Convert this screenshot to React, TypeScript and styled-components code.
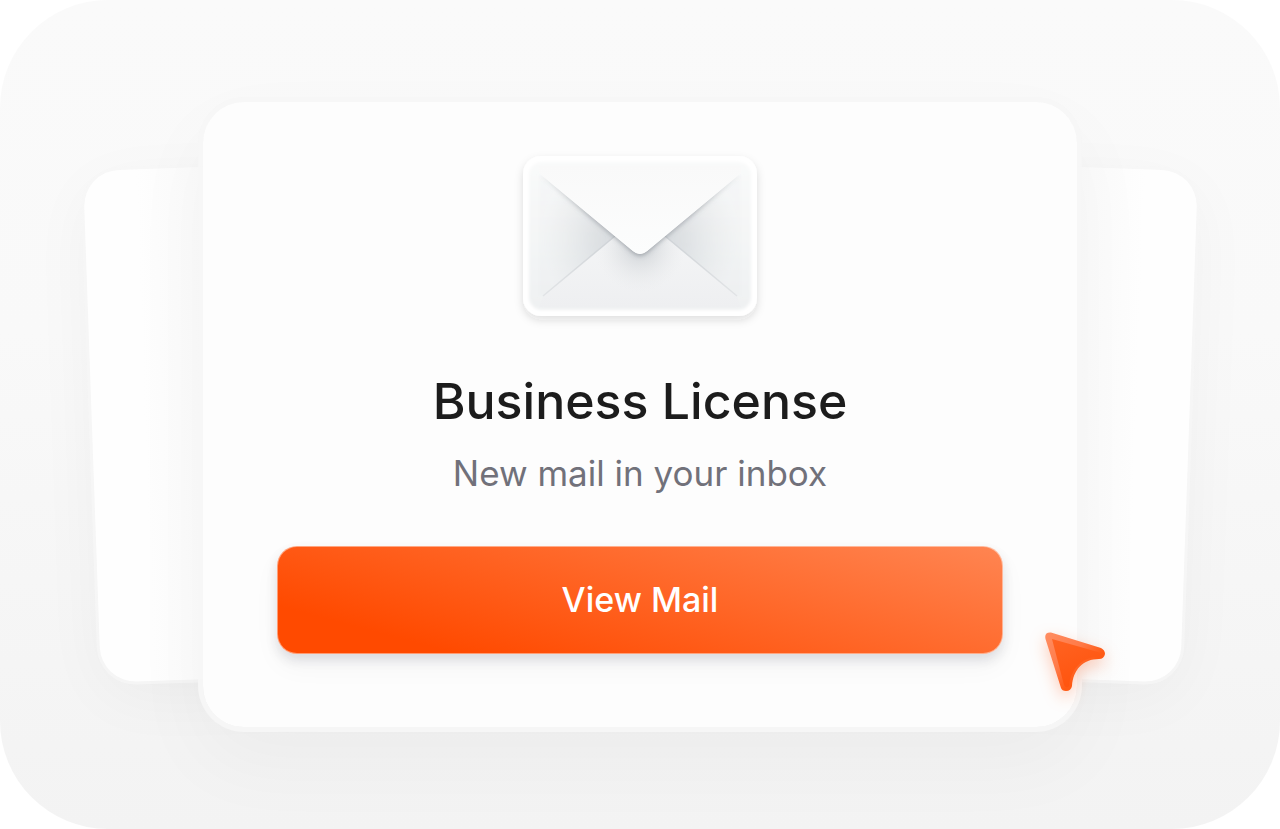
import React from "react";
import styled, { createGlobalStyle } from "styled-components";

const GlobalStyle = createGlobalStyle`
  *, *::before, *::after { box-sizing: border-box; }
  body {
    margin: 0;
    background: #ffffff;
    font-family: Inter, "Noto Sans", sans-serif;
  }
`;

const Stage = styled.main`
  display: grid;
  place-items: center;
  min-height: 100vh;
  padding: 48px 0;
  overflow: hidden;
  border-radius: 108px;
  background: linear-gradient(180deg, #fafafa 0%, #f9f9f9 40%, #f3f3f3 100%);
`;

const Deck = styled.div`
  display: grid;
  grid-template-columns: minmax(0, 1fr);
  align-items: center;
  justify-items: center;
  width: 85.7%;
`;

const SideCard = styled.div<{ $side: "left" | "right" }>`
  grid-area: 1 / 1;
  justify-self: ${(p) => (p.$side === "left" ? "start" : "end")};
  width: 40%;
  height: 512px;
  margin-top: 24px;
  border-radius: 36px;
  background: linear-gradient(
    ${(p) => (p.$side === "left" ? "90deg" : "270deg")},
    #fefefe 12%,
    #fafafa 28%
  );
  box-shadow: 0 0 0 3px rgba(246, 246, 246, 0.8), 0 16px 64px rgba(0, 0, 0, 0.04);
  transform: rotate(${(p) => (p.$side === "left" ? "-2deg" : "2deg")});
  transform-origin: ${(p) => p.$side} center;
`;

const Card = styled.article`
  grid-area: 1 / 1;
  position: relative;
  display: flex;
  flex-direction: column;
  align-items: center;
  width: 80.6%;
  padding: 54px 74px 73px;
  border: 5px solid rgba(246, 246, 246, 0.9);
  border-radius: 46px;
  background: #fdfdfd;
  background-clip: padding-box;
  box-shadow: 0 32px 80px rgba(0, 0, 0, 0.036);
  text-align: center;
`;

const Envelope = styled.svg`
  display: block;
  flex: none;
  overflow: visible;
`;

const Title = styled.h1`
  margin: 53px 0 0;
  color: #1c1c1c;
  font-size: 50px;
  font-weight: 500;
  line-height: 64px;
`;

const Subtitle = styled.p`
  margin: 16px 0 0;
  color: #71717a;
  font-size: 35px;
  font-weight: 400;
  line-height: 48px;
`;

const ViewButton = styled.button`
  width: 100%;
  height: 108px;
  margin-top: 49px;
  padding: 0;
  border: 1px solid rgba(255, 255, 255, 0.45);
  border-radius: 20px;
  background: linear-gradient(15deg, #ff4a00 16%, #ff8552 100%) border-box;
  box-shadow: 0 6px 12px rgba(30, 30, 50, 0.12), 0 12px 28px rgba(30, 30, 50, 0.04);
  color: #ffffff;
  font-family: inherit;
  font-size: 34px;
  font-weight: 500;
  line-height: 44px;
  cursor: pointer;
`;

const Pointer = styled.svg`
  position: absolute;
  right: -28px;
  bottom: 35px;
  overflow: visible;
  filter: drop-shadow(0 6px 8px rgba(255, 80, 10, 0.28));
`;

function MailIcon() {
  return (
    <Envelope width="234" height="160" viewBox="0 0 234 160" aria-hidden="true">
      <defs>
        <linearGradient id="paper" x1="0" y1="0" x2="0" y2="1">
          <stop offset="0" stopColor="#f9fafa" />
          <stop offset="1" stopColor="#eff1f2" />
        </linearGradient>
        <linearGradient id="flap" x1="0" y1="0" x2="0" y2="1">
          <stop offset="0" stopColor="#f9f9f9" />
          <stop offset="1" stopColor="#fcfdfd" />
        </linearGradient>
        <linearGradient id="pocket" x1="0" y1="0" x2="0" y2="1">
          <stop offset="0" stopColor="#f4f5f6" />
          <stop offset="1" stopColor="#eeeff1" />
        </linearGradient>
        <radialGradient id="shade" gradientUnits="userSpaceOnUse" cx="117" cy="84" r="100">
          <stop offset="0" stopColor="#b4bac0" stopOpacity="0.6" />
          <stop offset="0.45" stopColor="#c4c9ce" stopOpacity="0.45" />
          <stop offset="1" stopColor="#dfe2e5" stopOpacity="0.1" />
        </radialGradient>
        <radialGradient id="pocketShade" gradientUnits="userSpaceOnUse" cx="117" cy="90" r="46">
          <stop offset="0" stopColor="#aeb4ba" stopOpacity="0.6" />
          <stop offset="1" stopColor="#e4e6e8" stopOpacity="0" />
        </radialGradient>
        <linearGradient id="foldLeft" gradientUnits="userSpaceOnUse" x1="20" y1="140" x2="92" y2="80">
          <stop offset="0" stopColor="#d4d7da" stopOpacity="0.5" />
          <stop offset="1" stopColor="#cfd3d7" />
        </linearGradient>
        <linearGradient id="foldRight" gradientUnits="userSpaceOnUse" x1="214" y1="140" x2="142" y2="80">
          <stop offset="0" stopColor="#d4d7da" stopOpacity="0.5" />
          <stop offset="1" stopColor="#cfd3d7" />
        </linearGradient>
        <linearGradient id="edgeFade" gradientUnits="userSpaceOnUse" x1="14" y1="0" x2="220" y2="0">
          <stop offset="0" stopColor="#ffffff" stopOpacity="0" />
          <stop offset="0.25" stopColor="#ffffff" />
          <stop offset="0.75" stopColor="#ffffff" />
          <stop offset="1" stopColor="#ffffff" stopOpacity="0" />
        </linearGradient>
        <mask id="flapMask" maskUnits="userSpaceOnUse" x="0" y="0" width="234" height="160">
          <rect width="234" height="160" fill="url(#edgeFade)" />
        </mask>
        <filter id="outer" x="-20%" y="-20%" width="140%" height="150%">
          <feDropShadow dx="0" dy="4" stdDeviation="4" floodColor="#20242c" floodOpacity="0.14" />
        </filter>
        <filter id="flapShadow" x="-20%" y="-20%" width="140%" height="150%">
          <feDropShadow dx="0" dy="2" stdDeviation="2" floodColor="#6f7780" floodOpacity="0.5" />
        </filter>
        <filter id="soft" x="-10%" y="-10%" width="120%" height="120%">
          <feGaussianBlur stdDeviation="1.5" />
        </filter>
        <clipPath id="inside">
          <rect x="6" y="6" width="222" height="148" rx="13" />
        </clipPath>
      </defs>
      <rect width="234" height="160" rx="18" fill="#ffffff" filter="url(#outer)" />
      <rect x="6" y="6" width="222" height="148" rx="13" fill="url(#paper)" filter="url(#soft)" />
      <g clipPath="url(#inside)">
        <path d="M16 18 L117 100 L218 18 V140 H16 Z" fill="url(#shade)" filter="url(#soft)" />
        <path d="M20 140 L92 80 H142 L214 140 L218 151 H16 Z" fill="url(#pocket)" />
        <path d="M20 140 L92 80 H142 L214 140 Z" fill="url(#pocketShade)" />
        <path d="M20 140 L92 80" stroke="url(#foldLeft)" strokeWidth="1.5" />
        <path d="M214 140 L142 80" stroke="url(#foldRight)" strokeWidth="1.5" />
        <g mask="url(#flapMask)">
          <path d="M16 17 L110 95 Q117 101 124 95 L218 17 Z" fill="url(#flap)" filter="url(#flapShadow)" />
        </g>
        <path d="M16 17 L110 95 Q117 101 124 95 L218 17 V10 H16 Z" fill="url(#flap)" />
      </g>
    </Envelope>
  );
}

function CursorIcon() {
  return (
    <Pointer width="60" height="60" viewBox="0 0 60 60" aria-hidden="true">
      <defs>
        <linearGradient id="cursorFill" x1="0" y1="0" x2="0.4" y2="1">
          <stop offset="0" stopColor="#ff6322" />
          <stop offset="1" stopColor="#ff540e" />
        </linearGradient>
        <linearGradient id="cursorRim" x1="0" y1="0" x2="1" y2="1">
          <stop offset="0" stopColor="#ff8e62" />
          <stop offset="0.4" stopColor="#ff7a48" />
          <stop offset="0.65" stopColor="#ff5a14" />
        </linearGradient>
      </defs>
      <path
        d="M6 0.5 L56 16 Q60 18 60 22 Q59 27 54 27 C38 27 28 38 27 54 Q26 59 21 59 Q17 59 16 56 L0.5 7 Q-1 0 6 0.5 Z"
        fill="url(#cursorRim)"
      />
      <path
        d="M7 7 L53 20 Q57 23 53 25 C37 25 26 37 24 54 Q21 57 19 53 Z"
        fill="url(#cursorFill)"
      />
    </Pointer>
  );
}

export default function App() {
  return (
    <>
      <GlobalStyle />
      <Stage>
        <Deck>
          <SideCard $side="left" />
          <SideCard $side="right" />
          <Card>
            <MailIcon />
            <Title>Business License</Title>
            <Subtitle>New mail in your inbox</Subtitle>
            <ViewButton type="button">View Mail</ViewButton>
            <CursorIcon />
          </Card>
        </Deck>
      </Stage>
    </>
  );
}
